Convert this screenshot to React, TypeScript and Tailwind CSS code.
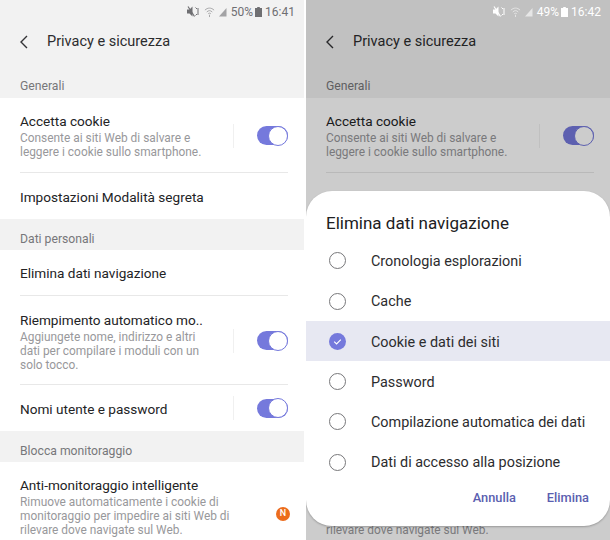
import type { ReactNode } from 'react'

function Toggle() {
  return (
    <div className="flex items-center">
      <div className="mr-[23px] h-[24px] w-px bg-[#f0f0f0]" />
      <div className="relative h-[19px] w-[31px] rounded-full bg-[#7579dc]">
        <div className="absolute right-0 top-[-0.5px] h-[20px] w-[20px] rounded-full border border-[#7579dc] bg-white" />
      </div>
    </div>
  )
}

function Section({ label }: { label: string }) {
  return (
    <div className="flex h-[31px] items-center bg-[#f2f2f2] px-[20px] pt-[9px] text-[12.2px] text-[#77777a]">{label}</div>
  )
}

function Row({
  rowClass,
  textClass,
  title,
  sub,
  right,
  divider,
}: {
  rowClass: string
  textClass: string
  title: string
  sub?: string[]
  right?: ReactNode
  divider?: boolean
}) {
  return (
    <div className={`relative flex justify-between pl-[20px] pr-[16px] ${rowClass}`}>
      <div className={textClass}>
        <div className="text-[13.6px] leading-[18px] text-[#232325]">{title}</div>
        {sub && (
          <div className="mt-[1px]">
            {sub.map((line) => (
              <div key={line} className="text-[11.9px] leading-[14px] text-[#98989b]">
                {line}
              </div>
            ))}
          </div>
        )}
      </div>
      {right}
      {divider && <div className="absolute bottom-0 left-[20px] right-[16px] h-px bg-[#e8e8e8]" />}
    </div>
  )
}

function StatusBar({ battery, time, light }: { battery: string; time: string; light?: boolean }) {
  const color = light ? 'text-white' : 'text-[#6f6f72]'
  return (
    <div className={`relative z-10 flex h-[22px] items-center justify-end pr-[9px] pt-[1px] text-[12px] ${color}`}>
      <svg width="12" height="11" viewBox="0 0 12 11" fill="currentColor" className="mr-[5px]">
        <path d="M0 3.500h2.500l3-3v10l-3-3H0z" />
        <path d="M1 .5l6.500 10" stroke="currentColor" strokeWidth="1.200" />
        <path d="M8.500 1.500l1.500 1.500M8.500 9.500L10 8M11 2v7" stroke="currentColor" strokeWidth="1" fill="none" />
      </svg>
      <svg width="11" height="12" viewBox="0 0 12 12" fill="none" stroke="currentColor" strokeWidth="1" className="mr-[3px] opacity-60">
        <path d="M1 4c3-3 7-3 10 0M3 6c2-2 4-2 6 0M4.500 8c1-1 2-1 3 0" />
        <path d="M6 9v2.500" />
      </svg>
      <svg width="9" height="10" viewBox="0 0 9 10" fill="currentColor" className="mr-[4px] opacity-60">
        <path d="M8.500 1v8.500H1z" />
      </svg>
      <span>{battery}</span>
      <svg width="7" height="10" viewBox="0 0 7 10" fill="currentColor" className="ml-[2px]">
        <path d="M2.200 0h2.600v1H7v9H0V1h2.200z" />
      </svg>
      <span className="ml-[3px]">{time}</span>
    </div>
  )
}

function Screen({ battery, time, light }: { battery: string; time: string; light?: boolean }) {
  return (
    <div className="h-[540px] w-[304px] overflow-hidden bg-white">
      <div className="h-[98px] bg-[#f2f2f2]">
        <StatusBar battery={battery} time={time} light={light} />
        <div className="flex h-[38px] items-center pl-[19px] pt-[1px]">
          <svg width="10" height="14" viewBox="0 0 10 14" fill="none" stroke="#333336" strokeWidth="1.400">
            <path d="M8 1L2 7l6 6" />
          </svg>
          <span className="ml-[18px] text-[14.5px] text-[#2c2c2e]">Privacy e sicurezza</span>
        </div>
        <div className="flex h-[38px] items-center px-[20px] pt-[14px] text-[12.2px] text-[#77777a]">Generali</div>
      </div>
      <Row
        rowClass="h-[75px] items-center"
        textClass="self-start pt-[14px]"
        title="Accetta cookie"
        sub={['Consente ai siti Web di salvare e', 'leggere i cookie sullo smartphone.']}
        right={<Toggle />}
        divider
      />
      <Row rowClass="h-[46px] items-center" textClass="pt-[1px]" title="Impostazioni Modalità segreta" />
      <Section label="Dati personali" />
      <Row rowClass="h-[46px] items-center" textClass="" title="Elimina dati navigazione" divider />
      <Row
        rowClass="h-[89px] items-center"
        textClass="self-start pt-[15px]"
        title="Riempimento automatico mo.."
        sub={['Aggiungete nome, indirizzo e altri', 'dati per compilare i moduli con un', 'solo tocco.']}
        right={<Toggle />}
        divider
      />
      <Row rowClass="h-[46px] items-center" textClass="pt-[1px]" title="Nomi utente e password" right={<Toggle />} />
      <Section label="Blocca monitoraggio" />
      <Row
        rowClass="h-[78px] items-center"
        textClass="self-start pt-[14px]"
        title="Anti-monitoraggio intelligente"
        sub={['Rimuove automaticamente i cookie di', 'monitoraggio per impedire ai siti Web di', 'rilevare dove navigate sul Web.']}
        right={
          <div className="-mr-[2px] mt-[26px] flex h-[14px] w-[14px] items-center justify-center rounded-full bg-[#ec6c1c] text-[9px] font-medium text-white">
            N
          </div>
        }
      />
    </div>
  )
}

const OPTIONS = [
  'Cronologia esplorazioni',
  'Cache',
  'Cookie e dati dei siti',
  'Password',
  'Compilazione automatica dei dati',
  'Dati di accesso alla posizione',
]

function Dialog() {
  return (
    <div className="absolute inset-x-0 top-[191px] h-[335px] rounded-[26px] bg-white shadow-[0_1px_2px_rgba(0,0,0,0.25)]">
      <div className="h-[49.600px] pl-[20px] pt-[21px] text-[17px] leading-[22px] text-[#202022]">Elimina dati navigazione</div>
      <div>
        {OPTIONS.map((option) => {
          const checked = option === 'Cookie e dati dei siti'
          return (
            <div key={option} className={`flex h-[40.300px] items-center pl-[23px] ${checked ? 'bg-[#e7e8f2]' : ''}`}>
              {checked ? (
                <svg width="17" height="17" viewBox="0 0 18 18" fill="none">
                  <circle cx="9" cy="9" r="9" fill="#7579dc" />
                  <path d="M5.500 9.200l2.500 2.300 4.500-4.500" stroke="white" strokeWidth="1.200" />
                </svg>
              ) : (
                <div className="h-[17px] w-[17px] rounded-full border border-[#77777a]" />
              )}
              <span className="ml-[25px] mt-[2px] text-[14.4px] text-[#2c2c2e]">{option}</span>
            </div>
          )
        })}
      </div>
      <div className="flex justify-end gap-[31px] pr-[21px] pt-[6px] text-[12.8px] font-medium text-[#5a5eb0]">
        <span>Annulla</span>
        <span>Elimina</span>
      </div>
    </div>
  )
}

export default function App() {
  return (
    <div className="flex h-[540px] w-[610px] justify-between overflow-hidden bg-white font-['Roboto',sans-serif]">
      <Screen battery="50%" time="16:41" />
      <div className="relative h-[540px] w-[304px] overflow-hidden">
        <Screen battery="49%" time="16:42" light />
        <div className="absolute inset-0 bg-black/20" />
        <Dialog />
      </div>
    </div>
  )
}
